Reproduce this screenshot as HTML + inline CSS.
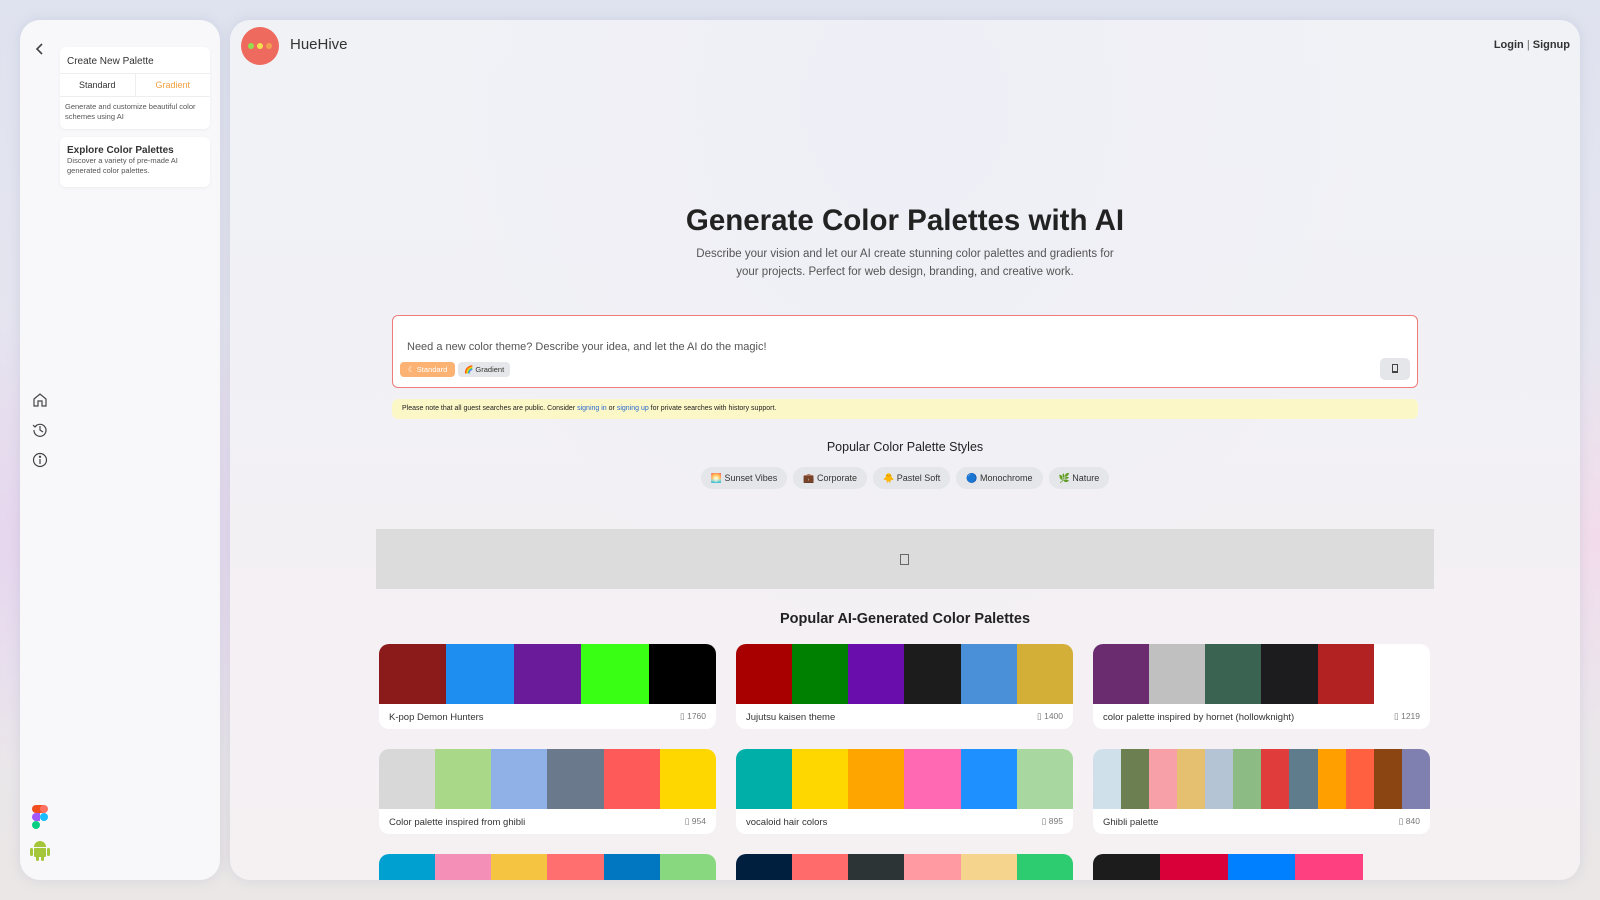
<!DOCTYPE html>
<html><head><meta charset="utf-8">
<style>
*{box-sizing:border-box;margin:0;padding:0}
body{width:1600px;height:900px;overflow:hidden;font-family:"Liberation Sans",sans-serif;color:#222;
background:radial-gradient(ellipse at 0% 60%,#e6d6ee 0,transparent 30%),radial-gradient(ellipse at 100% 60%,#f2dceb 0,transparent 25%),linear-gradient(180deg,#dfe3ef,#e9e6ef 60%,#ebe7e6);position:relative}
.side{position:absolute;left:20px;top:20px;width:200px;height:860px;background:#f8f8fa;border-radius:20px;box-shadow:0 0 12px rgba(150,160,190,.25)}
.main{position:absolute;left:230px;top:20px;width:1350px;height:860px;border-radius:20px;overflow:hidden;
background:radial-gradient(ellipse at 50% 10%,#eeeef6 0,transparent 50%),linear-gradient(180deg,#f1f2f6 0,#f1f1f5 40%,#f4f0f4 70%,#f5f1f3 100%);box-shadow:0 0 12px rgba(150,160,190,.25)}
.card{position:absolute;left:40px;width:150px;background:#fff;border-radius:6px;box-shadow:0 1px 3px rgba(0,0,0,.05)}
.abs{position:absolute}
.chip{display:inline-flex;align-items:center;gap:5px;height:22px;padding:0 10px;border-radius:11px;background:#e5e6ea;font-size:9px;color:#333;margin:0 3px}
.pal{position:absolute;width:337px;height:85px;background:#fff;border-radius:10px;overflow:hidden}
.sw{display:flex;height:60px}
.sw div{height:60px}
.lab{position:absolute;left:10px;top:68px;font-size:9.5px;color:#333}
.cnt{position:absolute;right:10px;top:67px;font-size:8.5px;color:#777}
</style></head><body>
<div class="side">
 <svg class="abs" style="left:15px;top:23px" width="10" height="12" viewBox="0 0 10 12"><path d="M7 1 L2 6 L7 11" fill="none" stroke="#444" stroke-width="1.6"/></svg>
 <div class="card" style="top:27px;height:82px">
  <div style="font-size:10px;padding:9px 7px 0;height:27px;border-bottom:1px solid #eee;color:#333">Create New Palette</div>
  <div style="display:flex;height:23px;border-bottom:1px solid #eee;font-size:9px;line-height:23px;text-align:center"><div style="flex:1;border-right:1px solid #eee;color:#333">Standard</div><div style="flex:1;color:#f0a040">Gradient</div></div>
  <div style="font-size:7.5px;color:#555;padding:5px 5px;line-height:10px">Generate and customize beautiful color schemes using AI</div>
 </div>
 <div class="card" style="top:117px;height:50px;padding:8px 7px">
  <div style="font-size:10px;color:#333;font-weight:bold">Explore Color Palettes</div>
  <div style="font-size:7.5px;color:#555;line-height:10px">Discover a variety of pre-made AI generated color palettes.</div>
 </div>
 <svg class="abs" style="left:12px;top:372px" width="16" height="16" viewBox="0 0 16 16" fill="none" stroke="#444" stroke-width="1.2"><path d="M2 7 L8 2 L14 7 V14 H10 V9 H6 V14 H2 Z"/></svg>
 <svg class="abs" style="left:12px;top:402px" width="16" height="16" viewBox="0 0 16 16" fill="none" stroke="#444" stroke-width="1.2"><path d="M3 5 A6 6 0 1 1 2 8"/><path d="M1 3 L3 5 L5 3"/><path d="M8 4 V8 L11 10"/></svg>
 <svg class="abs" style="left:12px;top:432px" width="16" height="16" viewBox="0 0 16 16" fill="none" stroke="#444" stroke-width="1.2"><circle cx="8" cy="8" r="6.5"/><path d="M8 7 V12"/><circle cx="8" cy="4.8" r=".6" fill="#444"/></svg>
 <svg class="abs" style="left:11px;top:784px" width="18" height="26" viewBox="0 0 18 26"><rect x="1" y="1" width="8" height="8" rx="4" fill="#f24e1e"/><rect x="5" y="1" width="8" height="8" rx="0" fill="#f24e1e"/><rect x="9" y="1" width="8" height="8" rx="4" fill="#ff7262"/><rect x="1" y="9" width="8" height="8" rx="4" fill="#a259ff"/><rect x="5" y="9" width="4" height="8" fill="#a259ff"/><circle cx="13" cy="13" r="4" fill="#1abcfe"/><rect x="1" y="17" width="8" height="8" rx="4" fill="#0acf83"/></svg>
 <svg class="abs" style="left:9px;top:818px" width="22" height="24" viewBox="0 0 22 24" fill="#a4c639"><path d="M5 9 A6 6 0 0 1 17 9 Z"/><rect x="5" y="10" width="12" height="9" rx="1"/><rect x="1" y="10" width="3" height="8" rx="1.5"/><rect x="18" y="10" width="3" height="8" rx="1.5"/><rect x="7" y="17" width="3" height="6" rx="1.5"/><rect x="12" y="17" width="3" height="6" rx="1.5"/></svg>
</div>
<div class="main">
 <div class="abs" style="left:11px;top:7px;width:38px;height:38px;border-radius:50%;background:#ef6a5e"></div>
 <div class="abs" style="left:18px;top:23px;width:6px;height:6px;border-radius:50%;background:#8fe04c"></div>
 <div class="abs" style="left:27px;top:23px;width:6px;height:6px;border-radius:50%;background:#f2e04c"></div>
 <div class="abs" style="left:36px;top:23px;width:6px;height:6px;border-radius:50%;background:#f2a050"></div>
 <div class="abs" style="left:60px;top:16px;font-size:15px;color:#333">HueHive</div>
 <div class="abs" style="right:10px;top:19px;font-size:11px;font-weight:bold;color:#333">Login <span style="font-weight:normal;color:#666">|</span> Signup</div>
 <div class="abs" style="left:0;width:1350px;top:184px;text-align:center;font-size:29.5px;font-weight:bold;color:#222">Generate Color Palettes with AI</div>
 <div class="abs" style="left:0;width:1350px;top:225px;text-align:center;font-size:11.5px;line-height:18px;color:#555">Describe your vision and let our AI create stunning color palettes and gradients for<br>your projects. Perfect for web design, branding, and creative work.</div>
 <div class="abs" style="left:162px;top:295px;width:1026px;height:73px;background:#fff;border:1.5px solid #ef7b7b;border-radius:6px">
  <div class="abs" style="left:14px;top:25px;font-size:11px;color:#555">Need a new color theme? Describe your idea, and let the AI do the magic!</div>
  <div class="abs" style="left:7px;top:46px;height:15px;padding:0 8px;background:#fbb272;border-radius:4px;font-size:7.5px;line-height:15px;color:#fff">☾ Standard</div>
  <div class="abs" style="left:65px;top:46px;height:15px;padding:0 6px;background:#e6e7ea;border-radius:4px;font-size:7.5px;line-height:15px;color:#333">🌈 Gradient</div>
  <div class="abs" style="right:7px;top:42px;width:30px;height:22px;background:#e5e6ea;border-radius:5px"><div style="position:absolute;left:12px;top:6px;width:6px;height:9px;border:1px solid #444;border-bottom-width:2px"></div></div>
 </div>
 <div class="abs" style="left:162px;top:379px;width:1026px;height:20px;background:#fcf7c6;border-radius:6px;font-size:7px;line-height:20px;padding-left:10px;color:#222">Please note that all guest searches are public. Consider <span style="color:#2a6ad0">signing in</span> or <span style="color:#2a6ad0">signing up</span> for private searches with history support.</div>
 <div class="abs" style="left:0;width:1350px;top:420px;text-align:center;font-size:12.5px;color:#222">Popular Color Palette Styles</div>
 <div class="abs" style="left:0;width:1350px;top:447px;text-align:center">
  <span class="chip">🌅 Sunset Vibes</span><span class="chip">💼 Corporate</span><span class="chip">🐥 Pastel Soft</span><span class="chip">🔵 Monochrome</span><span class="chip">🌿 Nature</span>
 </div>
 <div class="abs" style="left:146px;top:509px;width:1058px;height:60px;background:#dcdcdc"><div style="position:absolute;left:524px;top:25px;width:9px;height:11px;border:1px solid #666"></div></div>
 <div class="abs" style="left:0;width:1350px;top:591px;text-align:center;font-size:14.5px;font-weight:bold;color:#222">Popular AI-Generated Color Palettes</div>

 <div class="pal" style="left:149px;top:624px"><div class="sw"><div style="width:20%;background:#8b1a1a"></div><div style="width:20%;background:#1e8ef0"></div><div style="width:20%;background:#6a1b9a"></div><div style="width:20%;background:#39ff14"></div><div style="width:20%;background:#000"></div></div><div class="lab">K-pop Demon Hunters</div><div class="cnt">▯ 1760</div></div>
 <div class="pal" style="left:506px;top:624px"><div class="sw"><div style="width:16.66%;background:#a80000"></div><div style="width:16.66%;background:#008000"></div><div style="width:16.66%;background:#6a0dad"></div><div style="width:16.66%;background:#1c1c1c"></div><div style="width:16.66%;background:#4a90d9"></div><div style="width:16.7%;background:#d4af37"></div></div><div class="lab">Jujutsu kaisen theme</div><div class="cnt">▯ 1400</div></div>
 <div class="pal" style="left:863px;top:624px"><div class="sw"><div style="width:16.66%;background:#6a2c6e"></div><div style="width:16.66%;background:#c0c0c0"></div><div style="width:16.66%;background:#3a6351"></div><div style="width:16.66%;background:#1c1c1e"></div><div style="width:16.66%;background:#b22222"></div></div><div class="lab">color palette inspired by hornet (hollowknight)</div><div class="cnt">▯ 1219</div></div>

 <div class="pal" style="left:149px;top:729px"><div class="sw"><div style="width:16.66%;background:#d8d8d8"></div><div style="width:16.66%;background:#a8d888"></div><div style="width:16.66%;background:#90b0e8"></div><div style="width:16.66%;background:#6a7a8c"></div><div style="width:16.66%;background:#ff5a5a"></div><div style="width:16.7%;background:#ffd700"></div></div><div class="lab">Color palette inspired from ghibli</div><div class="cnt">▯ 954</div></div>
 <div class="pal" style="left:506px;top:729px"><div class="sw"><div style="width:16.66%;background:#00b0a8"></div><div style="width:16.66%;background:#ffd700"></div><div style="width:16.66%;background:#ffa500"></div><div style="width:16.66%;background:#ff69b4"></div><div style="width:16.66%;background:#1e90ff"></div><div style="width:16.7%;background:#a8d8a0"></div></div><div class="lab">vocaloid hair colors</div><div class="cnt">▯ 895</div></div>
 <div class="pal" style="left:863px;top:729px"><div class="sw"><div style="width:8.33%;background:#d0e0ea"></div><div style="width:8.33%;background:#6b7f50"></div><div style="width:8.33%;background:#f7a0a8"></div><div style="width:8.33%;background:#e4c070"></div><div style="width:8.33%;background:#b4c4d4"></div><div style="width:8.33%;background:#8cbc84"></div><div style="width:8.33%;background:#e03c3c"></div><div style="width:8.33%;background:#5f7c8c"></div><div style="width:8.33%;background:#ffa000"></div><div style="width:8.33%;background:#ff6040"></div><div style="width:8.33%;background:#8b4513"></div><div style="width:8.4%;background:#8080b0"></div></div><div class="lab">Ghibli palette</div><div class="cnt">▯ 840</div></div>

 <div class="pal" style="left:149px;top:834px"><div class="sw"><div style="width:16.66%;background:#00a0d0"></div><div style="width:16.66%;background:#f490b8"></div><div style="width:16.66%;background:#f5c542"></div><div style="width:16.66%;background:#ff6f6f"></div><div style="width:16.66%;background:#0077c0"></div><div style="width:16.7%;background:#88d880"></div></div></div>
 <div class="pal" style="left:506px;top:834px"><div class="sw"><div style="width:16.66%;background:#001f3f"></div><div style="width:16.66%;background:#ff6b6b"></div><div style="width:16.66%;background:#2d3436"></div><div style="width:16.66%;background:#ff9aa2"></div><div style="width:16.66%;background:#f5d58e"></div><div style="width:16.7%;background:#2ecc71"></div></div></div>
 <div class="pal" style="left:863px;top:834px;background:transparent"><div class="sw"><div style="width:20%;background:#1c1c1c"></div><div style="width:20%;background:#d9003a"></div><div style="width:20%;background:#0080ff"></div><div style="width:20%;background:#ff4080"></div></div></div>
</div>
</body></html>
